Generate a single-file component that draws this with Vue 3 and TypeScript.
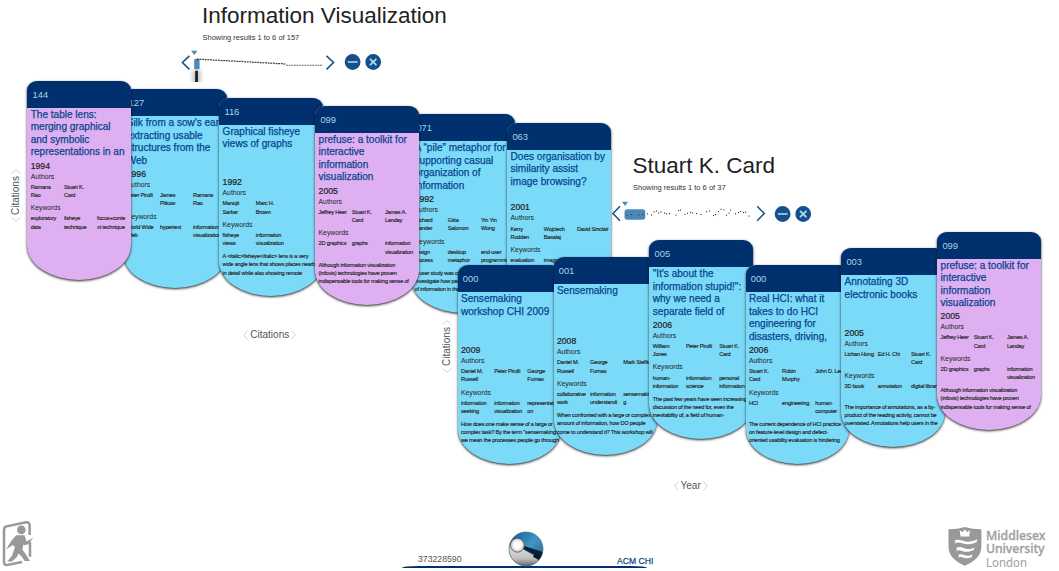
<script setup lang="ts">
interface Card {
  x: number
  y: number
  under?: boolean
  count: string
  tone: 'blue' | 'pink'
  title: string[]
  year: string
  authors: string[]
  keywords: string[]
  summary: string[]
}

const prefuse = {
  count: '099',
  tone: 'pink' as const,
  title: ['prefuse: a toolkit for', 'interactive', 'information', 'visualization'],
  year: '2005',
  authors: ['Jeffrey Heer', 'Stuart K.\nCard', 'James A.\nLanday'],
  keywords: ['2D graphics', 'graphs', 'information\nvisualization'],
  summary: ['Although information visualization', '(infovis) technologies have proven', 'indispensable tools for making sense of'],
}

const cards: Card[] = [
  {
    x: 27.3, y: 81, count: '144', tone: 'pink',
    title: ['The table lens:', 'merging graphical', 'and symbolic', 'representations in an'],
    year: '1994',
    authors: ['Ramana\nRao', 'Stuart K.\nCard'],
    keywords: ['exploratory\ndata', 'fisheye\ntechnique', 'focus+conte\nxt technique'],
    summary: [],
  },
  {
    x: 123.3, y: 89.3, under: true, count: '127', tone: 'blue',
    title: ["Silk from a sow's ear:", 'extracting usable', 'structures from the', 'Web'],
    year: '1996',
    authors: ['Peter Pirolli', 'James\nPitkow', 'Ramana\nRao'],
    keywords: ['World Wide\nWeb', 'hypertext', 'information\nvisualization'],
    summary: [],
  },
  {
    x: 219.2, y: 97.6, count: '116', tone: 'blue',
    title: ['Graphical fisheye', 'views of graphs'],
    year: '1992',
    authors: ['Manojit\nSarkar', 'Marc H.\nBrown'],
    keywords: ['fisheye\nviews', 'information\nvisualization'],
    summary: ['A <italic>fisheye</italic> lens is a very', 'wide angle lens that shows places nearby', 'in detail while also showing remote'],
  },
  { x: 315.2, y: 106, ...prefuse },
  {
    x: 411.2, y: 114.3, under: true, count: '071', tone: 'blue',
    title: ['A “pile” metaphor for', 'supporting casual', 'organization of', 'information'],
    year: '1992',
    authors: ['Richard\nMander', 'Gitta\nSalomon', 'Yin Yin\nWong'],
    keywords: ['design\nprocess', 'desktop\nmetaphor', 'end-user\nprogramming'],
    summary: ['A user study was conducted to', 'investigate how people deal with', 'of information in their work'],
  },
  {
    x: 507.2, y: 122.7, count: '063', tone: 'blue',
    title: ['Does organisation by', 'similarity assist', 'image browsing?'],
    year: '2001',
    authors: ['Kerry\nRodden', 'Wojciech\nBasalaj', 'David Sinclair'],
    keywords: ['evaluation', 'image'],
    summary: [],
  },
  {
    x: 457.6, y: 265.3, count: '000', tone: 'blue',
    title: ['Sensemaking', 'workshop CHI 2009'],
    year: '2009',
    authors: ['Daniel M.\nRussell', 'Peter Pirolli', 'George\nFurnas'],
    keywords: ['information\nseeking', 'information\nvisualization', 'representati\non'],
    summary: ['How does one make sense of a large or', 'complex task? By the term "sensemaking"', 'we mean the processes people go through'],
  },
  {
    x: 553.5, y: 256.6, count: '001', tone: 'blue',
    title: ['Sensemaking'],
    year: '2008',
    authors: ['Daniel M.\nRussell', 'George\nFurnas', 'Mark Stefik'],
    keywords: ['collaborative\nwork', 'information\nunderstandi', 'sensemakin\ng'],
    summary: ['When confronted with a large or complex', 'amount of information, how DO people', 'come to understand it? This workshop will'],
  },
  {
    x: 649.4, y: 240.2, count: '005', tone: 'blue',
    title: ['"It\'s about the', 'information stupid!":', 'why we need a', 'separate field of'],
    year: '2006',
    authors: ['William\nJones', 'Peter Pirolli', 'Stuart K.\nCard'],
    keywords: ['human-\ninformation', 'information\nscience', 'personal\ninformation'],
    summary: ['The past few years have seen increasing', 'discussion of the need for, even the', 'inevitability of, a field of human-'],
  },
  {
    x: 745.5, y: 265.3, count: '000', tone: 'blue',
    title: ['Real HCI: what it', 'takes to do HCI', 'engineering for', 'disasters, driving,'],
    year: '2006',
    authors: ['Stuart K.\nCard', 'Robin\nMurphy', 'John D. Lee'],
    keywords: ['HCI', 'engineering', 'human-\ncomputer'],
    summary: ['The current dependence of HCI practice', 'on feature-level design and defect-', 'oriented usability evaluation is hindering'],
  },
  {
    x: 841.2, y: 248.4, count: '003', tone: 'blue',
    title: ['Annotating 3D', 'electronic books'],
    year: '2005',
    authors: ['Lichan Hong', 'Ed H. Chi', 'Stuart K.\nCard'],
    keywords: ['3D book', 'annotation', 'digital library'],
    summary: ['The importance of annotations, as a by-', 'product of the reading activity, cannot be', 'overstated. Annotations help users in the'],
  },
  { x: 937.2, y: 231.6, ...prefuse },
]

const decline: number[][] = Array.from({ length: 48 }, (_, i) => {
  const x = 17 + i * 2.62
  const y = i < 34 ? 10.7 + Math.floor(i / 3) * 0.43 : 16.8
  return [x, y]
})

const scatter: number[][] = [
  [15.5, 13.5], [19.5, 13], [27, 13.5], [31, 13], [36, 12.3], [40, 13.5], [42.5, 10.3], [45, 9.5], [47, 11.5],
  [49.5, 10.5], [53, 11.5], [55, 12.3], [58, 12], [64.5, 13.5], [67, 9], [69, 8.5], [73.5, 12.8], [76, 11.7], [79, 10.8],
  [81, 11.5], [85, 12], [89.5, 13], [95, 10.2], [98, 9.5], [102, 14], [104, 13], [107, 10], [109.5, 7.8], [112.5, 8.3],
  [115, 13.6], [117.5, 11.5], [119, 8.5], [124, 12.3], [127, 11], [129, 10], [132, 11], [134, 10.7], [137.5, 14.5],
]
</script>

<template>
  <main class="canvas">
    <section class="group first">
      <h1>Information Visualization</h1>
      <p>Showing results 1 to 6 of 157</p>
      <div class="controls">
        <svg width="156" height="34" viewBox="0 0 156 34">
          <defs>
            <filter id="soft" x="-200%" y="-60%" width="500%" height="220%"><feGaussianBlur stdDeviation="2.2" /></filter>
          </defs>
          <path class="arrow" d="M9.4 7.8 2.4 14.5l7 6.9M146.5 7.8l7 6.7-7 6.9" />
          <path class="marker" d="M11.2 2.7h6.2l-3.1 4.4z" />
          <rect x="12.5" y="22" width="8" height="14" fill="#999" opacity=".6" filter="url(#soft)" />
          <rect class="marker" x="14.2" y="10.7" width="5.4" height="10.5" rx="1.2" />
          <rect x="15.2" y="22.7" width="2.7" height="11.3" fill="#1b1b1b" />
          <rect v-for="(p, i) in decline" :key="i" class="ink" :x="p[0]" :y="p[1]" width="1.8" :height="i < 34 ? 1.2 : 0.8" />
        </svg>
        <svg class="buttons" width="38" height="18" viewBox="0 0 38 18">
          <circle cx="8.6" cy="9" r="7.9" /><circle cx="29.2" cy="9" r="7.9" />
          <path d="M3.8 9h9.8M26 5.8l6.4 6.4M32.4 5.8 26 12.2" />
        </svg>
      </div>
    </section>

    <section class="group second">
      <h1>Stuart K. Card</h1>
      <p>Showing results 1 to 6 of 37</p>
      <div class="controls">
        <svg width="156" height="34" viewBox="0 0 156 34">
          <path class="arrow" d="m9 5.3-7 7.2 7 7.2M146.2 5.3l7 7.2-7 7.2" />
          <path class="marker" d="M11 .8h6l-3 4.2z" />
          <rect class="marker" x="13.5" y="8.3" width="20.8" height="10.4" rx="2.7" />
          <rect v-for="(p, i) in scatter" :key="i" class="ink" :x="p[0]" :y="p[1]" width="1.1" height="1.1" />
        </svg>
        <svg class="buttons" width="38" height="18" viewBox="0 0 38 18">
          <circle cx="8.6" cy="9" r="7.9" /><circle cx="29.2" cy="9" r="7.9" />
          <path d="M3.8 9h9.8M26 5.8l6.4 6.4M32.4 5.8 26 12.2" />
        </svg>
      </div>
    </section>

    <article
      v-for="(card, n) in cards"
      :key="n"
      class="card"
      :class="[card.tone, { under: card.under }]"
      :style="{ left: card.x + 'px', top: card.y + 'px' }"
    >
      <header>{{ card.count }}</header>
      <h2>{{ card.title.join('\n') }}</h2>
      <div class="year">{{ card.year }}</div>
      <h3>Authors</h3>
      <div class="columns">
        <span v-for="a in card.authors" :key="a">{{ a }}</span>
      </div>
      <h3 class="keywords">Keywords</h3>
      <div class="columns">
        <span v-for="k in card.keywords" :key="k">{{ k }}</span>
      </div>
      <div class="summary">{{ card.summary.join('\n') }}</div>
    </article>

    <div class="axis left"><svg viewBox="0 0 5 10"><path d="M4.5.5.7 5l3.8 4.5" /></svg><span>Citations</span><svg viewBox="0 0 5 10"><path d="M.5.5 4.3 5 .5 9.5" /></svg></div>
    <div class="axis middle"><svg viewBox="0 0 5 10"><path d="M4.5.5.7 5l3.8 4.5" /></svg><span>Citations</span><svg viewBox="0 0 5 10"><path d="M.5.5 4.3 5 .5 9.5" /></svg></div>
    <div class="axis inner"><svg viewBox="0 0 5 10"><path d="M4.5.5.7 5l3.8 4.5" /></svg><span>Citations</span><svg viewBox="0 0 5 10"><path d="M.5.5 4.3 5 .5 9.5" /></svg></div>
    <div class="axis bottom"><svg viewBox="0 0 5 10"><path d="M4.5.5.7 5l3.8 4.5" /></svg><span>Year</span><svg viewBox="0 0 5 10"><path d="M.5.5 4.3 5 .5 9.5" /></svg></div>

    <footer>
      <svg class="exit" width="36" height="54" viewBox="0 0 36 54">
        <path fill="none" stroke="#999" stroke-width="2.5" d="M29.6 18V8.2q0-3.4-3.6-2.9L6.6 9.4Q4 10 4 12.8v31.7q0 4.2 3.8 3.4L22 45M30 25v14.8" />
        <g fill="#999">
          <circle cx="21.3" cy="12.9" r="4.3" />
          <path d="M16.3 18.3h8.2l2 6.2 6.8-3.8-5 6.6-4.3.9-.6-1-1 5.5 3.3 4.2 4.2 7.1h-5.2l-3-4.4-3.3-3.2-1.5 3.6-5 4.6H7.2l5-6 2.7-8.7-2-1.8-7 4.4 5.5-8.8z" />
        </g>
      </svg>
      <div class="dock">
        <span class="number">373228590</span>
        <svg class="orb" width="36" height="36" viewBox="0 0 36 36">
          <defs>
            <linearGradient id="sky" x1="0" y1="0" x2="1" y2="1">
              <stop offset=".1" stop-color="#145f97" /><stop offset=".5" stop-color="#4394c6" /><stop offset="1" stop-color="#155383" />
            </linearGradient>
            <linearGradient id="silver" x1="0" y1="0" x2="0" y2="1">
              <stop offset="0" stop-color="#eee" /><stop offset=".65" stop-color="#bdbdbd" /><stop offset="1" stop-color="#555" />
            </linearGradient>
            <radialGradient id="pearl"><stop offset=".5" stop-color="#fff" /><stop offset="1" stop-color="#bbb" /></radialGradient>
            <clipPath id="round"><circle cx="18" cy="18" r="17" /></clipPath>
          </defs>
          <g clip-path="url(#round)">
            <path d="M0 0h36v36H0z" fill="url(#sky)" />
            <path d="M0 13 14 18l22 12v6H0z" fill="url(#silver)" />
            <path d="m15.5 14.8 20 6.4-2 6.5-18.3-10z" fill="#0b1f33" />
            <path d="m27 22.6 8 3.4-2 4.2-8-4.4z" fill="#081522" />
          </g>
          <circle cx="18" cy="18" r="17" fill="none" stroke="#4b6d85" stroke-width=".7" />
          <circle cx="9.4" cy="14.2" r="7" fill="url(#pearl)" stroke="#444" stroke-width=".7" />
        </svg>
        <span class="venue">ACM CHI</span>
        <i class="shelf"></i>
      </div>
      <svg class="brand" width="106" height="50" viewBox="0 0 106 50">
        <path fill="#999" d="M1 7.2C7 7.2 12 6.7 17.3 5c5.3 1.7 10.6 2.2 16.6 2.2v17c0 9.5-6.6 15-16.6 19.5C7.3 39.2 1 33.7 1 24.2z" />
        <path fill="#fff" d="m12.2 8 2.5 2.2L17.3 7.5l2.7 2.7L22.5 8l-.8 6.5h-8.7zM6.5 18.7c3-1.5 6-1.2 9 .1 4 1.6 8 1.1 12-.5l2.5-1-.8 2.6c-5 2.6-10 3.2-14.5 1.4-3-1.2-5-.6-8 .1l1.6-1.6zM8.4 26c3-1.5 5-1.2 7.6.1 3.6 1.5 7 1.2 11-.6l-.8 2.6c-4 1.9-8 2.4-11.6.8-3-1.2-3.6-.6-6.5-.1l1.7-1.6zM10.5 33c2-1.3 4-1 6.2 0 3 1.3 5 1 8.3-.6l-.7 2.5c-3 1.5-6 1.9-9 .6-2-.9-3-.5-5.1-.1l1.6-1.3z" />
        <g fill="#a0a0a0" font-family="'Noto Sans', 'Open Sans', sans-serif" font-size="12.3">
          <text x="38.5" y="17.5" font-weight="500" textLength="59.5" stroke="#a0a0a0" stroke-width=".3">Middlesex</text>
          <text x="38.5" y="31" font-weight="500" textLength="58.5" stroke="#a0a0a0" stroke-width=".3">University</text>
          <text x="38.5" y="44.5" font-weight="400" textLength="41" lengthAdjust="spacingAndGlyphs">London</text>
        </g>
      </svg>
    </footer>
  </main>
</template>

<style>
body {
  background: #fff;
  overflow: hidden;
}
</style>

<style scoped>
.canvas {
  position: relative;
  width: 1059px;
  height: 571px;
  overflow: hidden;
  display: flex;
  flex-direction: column;
  justify-content: flex-end;
  font-family: 'Liberation Sans', Arial, sans-serif;
  color: #222;
}
h1, h2, h3, p {
  margin: 0;
  font-weight: 400;
}
.group {
  position: absolute;
}
.first {
  left: 202px;
  top: 1px;
}
.second {
  left: 632.5px;
  top: 151.5px;
}
.group h1 {
  font-size: 22.5px;
  line-height: 29px;
  white-space: nowrap;
}
.second h1 {
  line-height: 28px;
}
.group p {
  margin-left: 0.5px;
  color: #333;
  font-size: 7.5px;
  line-height: 15px;
}
.second p {
  line-height: 15.5px;
}
.controls {
  display: flex;
  align-items: flex-start;
  margin: 2.5px 0 0 -22px;
  gap: 7.5px;
}
.second .controls {
  margin-top: 6px;
}
.controls svg {
  display: block;
}
.controls .buttons {
  margin-top: 5.5px;
}
.second .buttons {
  margin-top: 3.5px;
}
.arrow {
  fill: none;
  stroke: #16558c;
  stroke-width: 1.6;
}
.marker {
  fill: #4a89b9;
}
.ink {
  fill: #333;
}
.buttons circle {
  fill: #15508c;
}
.buttons path {
  stroke: #b5dcf0;
  stroke-width: 1.7;
  fill: none;
}

.card {
  position: absolute;
  z-index: 2;
  width: 103.6px;
  height: 198.8px;
  border-radius: 10px 10px 52px 52px / 9px 9px 35px 35px;
  box-shadow: 0 1px 2.5px rgba(20, 20, 20, 0.95);
  white-space: pre;
}
.under {
  z-index: 1;
}
.blue {
  background: #7cdaf9;
}
.pink {
  background: #dfb0f1;
}
.card header {
  height: 27px;
  padding-left: 5.2px;
  box-sizing: border-box;
  border-radius: 10px 10px 0 0 / 9px 9px 0 0;
  background: #00306d;
  color: #a9d3ea;
  font-size: 9.4px;
  line-height: 27.6px;
}
.card h2 {
  height: 49.8px;
  margin: 1px 0 0 3.4px;
  color: #07458d;
  font-size: 10.05px;
  line-height: 12.45px;
  -webkit-text-stroke: 0.25px #07458d;
}
.year {
  margin: 1px 0 0 3.4px;
  font-size: 8.7px;
  line-height: 12px;
  -webkit-text-stroke: 0.2px #222;
}
.card h3 {
  margin-left: 3.4px;
  font-size: 6.8px;
  line-height: 10px;
}
.card .keywords {
  margin-top: 4px;
}
.columns {
  display: grid;
  grid-template-columns: repeat(3, 33.2px);
  height: 16.4px;
  margin: 1.1px 0 0 3.4px;
}
.columns,
.summary {
  font-size: 5.6px;
  line-height: 8.2px;
  letter-spacing: -0.2px;
  -webkit-text-stroke: 0.15px #222;
}
.summary {
  margin: 4.8px 0 0 3.4px;
}

.axis {
  position: absolute;
  display: flex;
  align-items: center;
  gap: 2px;
  height: 12px;
  color: #555;
  font-size: 10px;
  line-height: 12px;
}
.axis svg {
  width: 5px;
  height: 10px;
  fill: none;
  stroke: #b9dbea;
  stroke-width: 1;
}
.middle {
  left: 243.3px;
  top: 328.5px;
}
.bottom {
  left: 673.5px;
  top: 479.5px;
}
.left,
.inner {
  width: 54px;
  transform: rotate(-90deg);
}
.left {
  left: -10.8px;
  top: 189px;
}
.inner {
  left: 419.5px;
  top: 339.5px;
}

footer {
  height: 54px;
  display: flex;
  justify-content: space-between;
  align-items: flex-start;
}
.dock {
  position: relative;
  display: grid;
  grid-template-columns: 106px 36px 103px;
  width: 245px;
  margin: 14px 0 0 366px;
}
.number {
  padding: 22px 0 0 16px;
  color: #555;
  font-size: 8.7px;
  line-height: 12px;
}
.venue {
  padding: 23.5px 0 0 73px;
  color: #0b4c88;
  font-size: 8.6px;
  line-height: 12px;
  white-space: nowrap;
  -webkit-text-stroke: 0.25px #0b4c88;
}
.orb {
  position: relative;
  z-index: 1;
  display: block;
}
.shelf {
  position: absolute;
  left: 0;
  top: 34.5px;
  width: 245px;
  height: 2.5px;
  background: #00306d;
  border-radius: 20px 20px 0 0 / 2.5px 2.5px 0 0;
}
.brand {
  margin: 5px 12px 0 auto;
  transform: translateX(6.5px);
}
.exit {
  flex: none;
}
</style>
